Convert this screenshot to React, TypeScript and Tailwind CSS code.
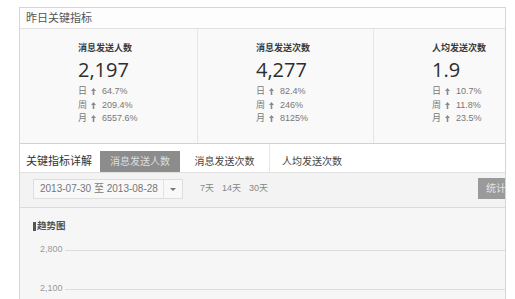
const cjk = "font-['Liberation_Sans','Noto_Sans_CJK_SC',sans-serif]";

const stats = [
  {
    title: "消息发送人数",
    value: "2,197",
    rows: [
      ["日", "64.7%"],
      ["周", "209.4%"],
      ["月", "6557.6%"],
    ],
    width: "w-[178px] border-r",
  },
  {
    title: "消息发送次数",
    value: "4,277",
    rows: [
      ["日", "82.4%"],
      ["周", "246%"],
      ["月", "8125%"],
    ],
    width: "w-[176px] border-r",
  },
  {
    title: "人均发送次数",
    value: "1.9",
    rows: [
      ["日", "10.7%"],
      ["周", "11.8%"],
      ["月", "23.5%"],
    ],
    width: "flex-1",
  },
];

function UpArrow() {
  return (
    <svg width="5" height="7" viewBox="0 0 5 7" className="block shrink-0">
      <path d="M2.5 0 L5 3 L3.3 3 L3.3 7 L1.7 7 L1.7 3 L0 3 Z" fill="#8a8a8a" />
    </svg>
  );
}

function StatCard({ s }: { s: (typeof stats)[number] }) {
  return (
    <div className={`${s.width} border-[#e6e6e6] pl-[58px] pt-[15px]`}>
      <div className="text-[9px] leading-[9px] font-bold text-[#3a3a3a]">{s.title}</div>
      <div className="mt-[7px] text-[20px] leading-[20px] text-[#2e2e2e] font-['Open_Sans',sans-serif]">
        {s.value}
      </div>
      <div className="mt-[5px]">
        {s.rows.map(([label, pct]) => (
          <div key={label} className="flex items-center h-[13.5px] text-[9px] text-[#777]">
            <span className="w-[13px] shrink-0">{label}</span>
            <UpArrow />
            <span className="ml-[6px]">{pct}</span>
          </div>
        ))}
      </div>
    </div>
  );
}

export default function App() {
  return (
    <div className={`w-[515px] h-[299px] bg-white overflow-hidden pt-[7px] pl-[19px] pr-[9px] ${cjk}`}>
      <div className="h-full border-x border-t border-[#d6d6d6] flex flex-col">
        {/* header */}
        <div className="h-[21px] shrink-0 border-b border-[#e2e2e2] bg-[#fdfdfd] pl-[6px] text-[11px] leading-[20px] text-[#555]">
          昨日关键指标
        </div>

        {/* stats */}
        <div className="h-[115px] shrink-0 flex border-b border-[#d2d2d2] bg-[#f9f9f9]">
          {stats.map((s) => (
            <StatCard key={s.title} s={s} />
          ))}
        </div>

        {/* tabs */}
        <div className="h-[29px] shrink-0 flex border-b border-[#e0e0e0] bg-white text-[10px]">
          <div className="w-[80px] pl-[6px] pt-[7px] flex items-center text-[11px] text-[#333]">关键指标详解</div>
          <div className="w-[80px] mt-[7px] bg-[#8c8c8c] flex items-center justify-center text-[#dedede]">
            消息发送人数
          </div>
          <div className="w-[90px] pt-[7px] flex items-center justify-center border-r border-[#e6e6e6] text-[#444]">
            消息发送次数
          </div>
          <div className="pl-[12px] pt-[7px] flex items-center text-[#444]">人均发送次数</div>
        </div>

        {/* date row */}
        <div className="h-[35px] shrink-0 flex items-start border-b border-[#dadada] bg-[#f3f3f3]">
          <div className="ml-[13px] mt-[6px] w-[150px] h-[20px] flex border border-[#dedede] bg-[#f8f8f8]">
            <div className="w-[130px] border-r border-[#e2e2e2] pl-[6px] text-[10px] leading-[18px] text-[#777]">
              2013-07-30 至 2013-08-28
            </div>
            <div className="flex-1 flex items-center justify-center">
              <span className="block w-0 h-0 border-x-[3px] border-x-transparent border-t-[3px] border-t-[#777]" />
            </div>
          </div>
          <div className="ml-[17px] mt-[9px] flex gap-[8px] text-[9px] leading-[12px] text-[#888]">
            <span>7天</span>
            <span>14天</span>
            <span>30天</span>
          </div>
          <div className="ml-auto mt-[5px] w-[27px] h-[21px] overflow-hidden whitespace-nowrap bg-[#9a9a9a] pl-[8px] text-[10px] leading-[21px] text-[#e4e4e4]">
            统计
          </div>
        </div>

        {/* chart */}
        <div className="flex-1 bg-[#f6f6f6] pt-[12px]">
          <div className="ml-[13px] flex items-center h-[12px]">
            <span className="w-[3px] h-[9px] bg-[#555]" />
            <span className="ml-[1px] text-[9.5px] font-bold text-[#555]">趋势图</span>
          </div>
          <div className="mt-[12px] flex items-center h-[12px] pl-[20px]">
            <span className="w-[25px] shrink-0 text-[9px] text-[#9a9a9a]">2,800</span>
            <span className="flex-1 h-px bg-[#dcdcdc]" />
          </div>
          <div className="mt-[27px] flex items-center h-[12px] pl-[20px]">
            <span className="w-[25px] shrink-0 text-[9px] text-[#9a9a9a]">2,100</span>
            <span className="flex-1 h-px bg-[#dcdcdc]" />
          </div>
        </div>
      </div>
    </div>
  );
}
